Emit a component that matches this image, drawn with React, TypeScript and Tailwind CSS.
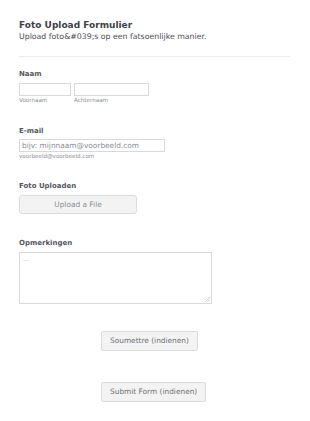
import React from 'react';

const Label: React.FC<{ children: React.ReactNode }> = ({ children }) => (
    <div className="text-[7px] leading-[9px] font-bold text-[#55585f]">{children}</div>
);

const SubLabel: React.FC<{ children: React.ReactNode }> = ({ children }) => (
    <div className="mt-[1px] text-[5.6px] leading-[7px] text-[#8a8d93]">{children}</div>
);

export default function App() {
    return (
        <div className="w-[310px] min-h-[421px] bg-white pl-[19px] pr-[20px] pt-[20px] font-['DejaVu_Sans',sans-serif] [font-variant-ligatures:none]">
            <h1 className="text-[9px] leading-[11px] font-bold text-[#3e4147]">Foto Upload Formulier</h1>
            <p className="mt-[1px] text-[7.8px] leading-[9px] text-[#4a4d54]">
                Upload foto&amp;#039;s op een fatsoenlijke manier.
            </p>
            <div className="mt-[15px] h-px bg-[#ececec]" />

            <div className="mt-[13px]">
                <Label>Naam</Label>
                <div className="mt-[4px] flex gap-[3px]">
                    <div>
                        <input className="block h-[13px] w-[52px] border border-[#d9d9d9] bg-white outline-none" />
                        <SubLabel>Voornaam</SubLabel>
                    </div>
                    <div>
                        <input className="block h-[13px] w-[75px] border border-[#d9d9d9] bg-white outline-none" />
                        <SubLabel>Achternaam</SubLabel>
                    </div>
                </div>
            </div>

            <div className="mt-[23px]">
                <Label>E-mail</Label>
                <input
                    placeholder="bijv: mijnnaam@voorbeeld.com"
                    className="mt-[3px] block h-[13px] w-[146px] border border-[#d9d9d9] bg-white px-[2px] text-[7.4px] leading-[11px] text-[#555] placeholder:text-[#8a8d93] outline-none"
                />
                <SubLabel>voorbeeld@voorbeeld.com</SubLabel>
            </div>

            <div className="mt-[22px]">
                <Label>Foto Uploaden</Label>
                <button className="mt-[4px] flex h-[19px] w-[118px] items-center justify-center rounded-[3px] border border-[#dcdcdc] bg-[#f3f3f3] text-[7.4px] text-[#8a8d93]">
                    Upload a File
                </button>
            </div>

            <div className="mt-[25px]">
                <Label>Opmerkingen</Label>
                <div className="relative mt-[4px] w-[193px]">
                    <textarea
                        placeholder="..."
                        className="block h-[52px] w-[193px] resize-none border border-[#d9d9d9] bg-white px-[3px] py-[2px] text-[6px] leading-[8px] placeholder:text-[#a5a7ab] outline-none"
                    />
                    <svg className="absolute bottom-[2px] right-[2px]" width="5" height="5" viewBox="0 0 5 5">
                        <path d="M5 0 L0 5 M5 2.5 L2.5 5" stroke="#bdbdbd" strokeWidth="0.8" />
                    </svg>
                </div>
            </div>

            <div className="ml-[82px] mt-[27px] flex flex-col items-start gap-[31px]">
                <button className="h-[20px] rounded-[2px] border border-[#dcdcdc] bg-[#f3f3f3] px-[8px] text-[7.4px] text-[#6e7177]">
                    Soumettre (indienen)
                </button>
                <button className="h-[20px] rounded-[2px] border border-[#dcdcdc] bg-[#f3f3f3] px-[8px] text-[7.4px] text-[#6e7177]">
                    Submit Form (indienen)
                </button>
            </div>
        </div>
    );
}
